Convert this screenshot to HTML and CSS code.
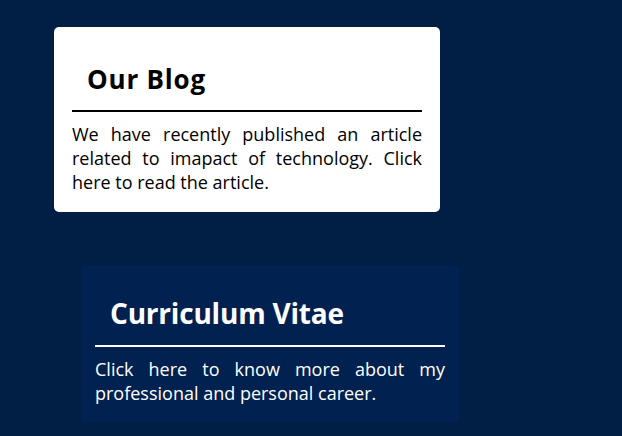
FILE: index.html
```html
<!DOCTYPE html>
<html lang="en">
<head>
<meta charset="utf-8">
<title>Blog and CV</title>
<link rel="stylesheet" href="styles.css">
</head>
<body>
<main class="page">
  <section class="card card-blog">
    <h2 class="card-title">Our Blog</h2>
    <hr class="card-rule">
    <p class="card-text">We have recently published an article related to imapact of technology. Click here to read the article.</p>
  </section>
  <section class="card card-cv">
    <h2 class="card-title">Curriculum Vitae</h2>
    <hr class="card-rule">
    <p class="card-text">Click here to know more about my professional and personal career.</p>
  </section>
</main>
</body>
</html>
```

FILE: styles.css
```css
html, body {
  margin: 0;
  padding: 0;
  background: #011f45;
  height: 100%;
  overflow: hidden;
}
body {
  font-family: "Open Sans", "Liberation Sans", sans-serif;
}
.page {
  display: flex;
  flex-direction: column;
  align-items: flex-start;
  padding-top: 27px;
}
.card {
  box-sizing: border-box;
  border-radius: 5px;
}
.card-blog {
  margin-left: 54px;
  width: 386px;
  background: #ffffff;
  color: #000000;
  padding: 36px 18px 18px;
}
.card-cv {
  margin-left: 81px;
  margin-top: 53px;
  width: 378px;
  background: #012150;
  color: #ffffff;
  padding: 30px 14px 17px;
}
.card-title {
  margin: 0;
  padding-left: 15px;
  font-weight: 700;
  font-size: 26px;
  line-height: 32px;
  letter-spacing: 0.8px;
}
.card-cv .card-title {
  font-size: 28px;
  line-height: 36px;
  letter-spacing: -0.2px;
}
.card-rule {
  margin: 15px 0 10px;
  border: 0;
  height: 2px;
  background: #000000;
}
.card-cv .card-rule {
  background: #ffffff;
  margin: 14px 0 10px;
}
.card-text {
  margin: 0;
  font-size: 18px;
  line-height: 24px;
  text-align: justify;
}
```
